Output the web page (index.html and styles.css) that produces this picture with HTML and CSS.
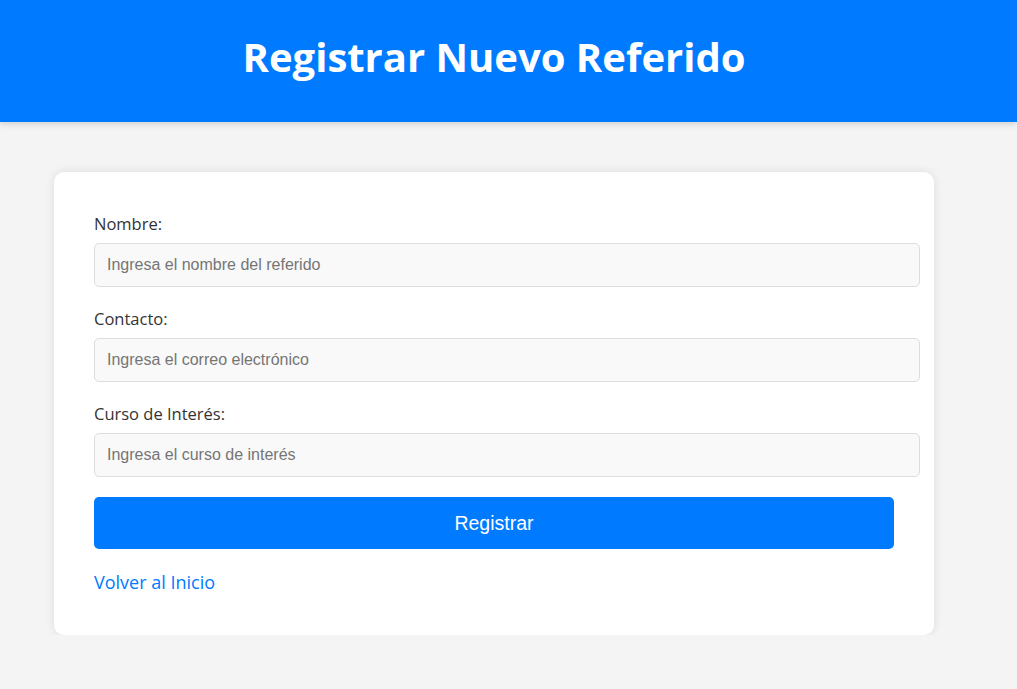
FILE: index.html
```html
<!DOCTYPE html>
<html lang="es">
<head>
<meta charset="utf-8">
<title>Registrar Nuevo Referido</title>
<link rel="stylesheet" href="styles.css">
</head>
<body>
<header class="top">
  <div class="top-inner">
    <h1 class="title">Registrar Nuevo Referido</h1>
  </div>
</header>
<main class="card">
  <form class="form">
    <label class="label" for="nombre">Nombre:</label>
    <input class="field" id="nombre" type="text" placeholder="Ingresa el nombre del referido">
    <label class="label" for="contacto">Contacto:</label>
    <input class="field" id="contacto" type="text" placeholder="Ingresa el correo electrónico">
    <label class="label" for="curso">Curso de Interés:</label>
    <input class="field" id="curso" type="text" placeholder="Ingresa el curso de interés">
    <button class="btn" type="button">Registrar</button>
  </form>
  <a class="back" href="#">Volver al Inicio</a>
</main>
</body>
</html>
```
FILE: styles.css
```css
html, body {
  margin: 0;
  padding: 0;
}
body {
  background: #f4f4f4;
  font-family: "Open Sans", "Noto Sans", sans-serif;
  color: #333;
}
.top {
  background: #007bff;
  height: 122px;
  box-shadow: 0 2px 6px rgba(0, 0, 0, 0.15);
  display: flex;
  align-items: center;
}
.top-inner {
  width: 880px;
  margin-left: 54px;
  text-align: center;
}
.title {
  margin: 0;
  color: #fff;
  font-size: 40px;
  font-weight: 700;
  line-height: 1;
  position: relative;
  top: -4px;
}
.card {
  box-sizing: border-box;
  width: 880px;
  margin: 50px 0 0 54px;
  padding: 40px;
  background: #fff;
  border-radius: 10px;
  box-shadow: 0 0 10px rgba(0, 0, 0, 0.1);
}
.form {
  display: flex;
  flex-direction: column;
  align-items: flex-start;
}
.label {
  display: block;
  font-size: 16.5px;
  line-height: 18px;
  padding-top: 3px;
  margin-bottom: 10px;
  color: #333;
}
.field {
  width: 100%;
  box-sizing: content-box;
  padding: 12px;
  margin: 0 0 20px;
  border: 1px solid #ddd;
  border-radius: 5px;
  background: #f9f9f9;
  font-family: "Liberation Sans", Arial, sans-serif;
  font-size: 16px;
  line-height: 18px;
  color: #333;
}
.field::placeholder {
  color: #757575;
}
.btn {
  width: 100%;
  height: 52px;
  margin: 0;
  border: none;
  border-radius: 5px;
  background: #007bff;
  color: #fff;
  font-family: "Liberation Sans", Arial, sans-serif;
  font-size: 19.5px;
}
.back {
  display: inline-block;
  margin-top: 21px;
  color: #007bff;
  text-decoration: none;
  font-size: 18px;
  line-height: 25px;
}
```
